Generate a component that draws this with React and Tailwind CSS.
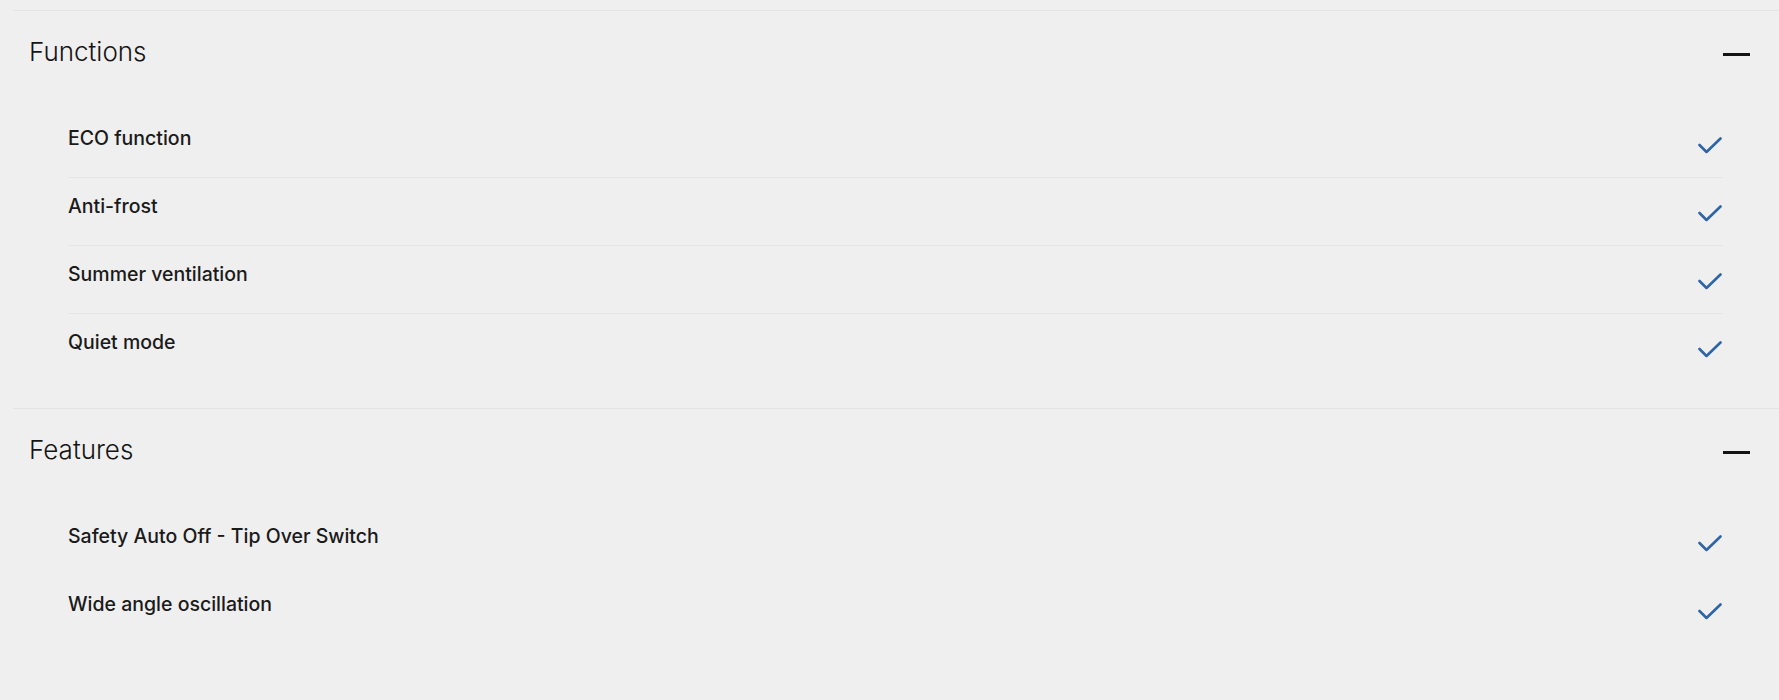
const sections = [
  {
    title: 'Functions',
    items: ['ECO function', 'Anti-frost', 'Summer ventilation', 'Quiet mode'],
    dividers: true,
  },
  {
    title: 'Features',
    items: ['Safety Auto Off - Tip Over Switch', 'Wide angle oscillation'],
    dividers: false,
  },
]

function Check() {
  return (
    <svg width="24" height="18" viewBox="0 0 24 18" fill="none" className="mt-[11px] mr-px">
      <polyline
        points="1.5,8 8.5,15 22.5,1.5"
        stroke="#2f65a5"
        strokeWidth="2.6"
        strokeLinecap="round"
        strokeLinejoin="round"
      />
    </svg>
  )
}

function Section({ title, items, dividers }) {
  return (
    <section className="border-t border-[#e4e4e4] pb-[26px]">
      {/* Header */}
      <div className="flex items-start justify-between pl-4 pr-[29px] pt-[25px]">
        <h2 className="text-[26px] leading-8 font-light text-[#141414]">{title}</h2>
        <span className="mt-[17px] block h-[3px] w-[27px] bg-[#141414]" />
      </div>

      {/* Items */}
      <ul className="mt-[42px] ml-[55px] mr-[56px]">
        {items.map((item, i) => (
          <li
            key={item}
            className={
              'flex h-[68px] items-start justify-between pt-4 ' +
              (dividers && i < items.length - 1 ? 'border-b border-[#e5e5e5]' : '')
            }
          >
            <span className="text-[19.5px] leading-6 font-medium text-[#1a1a1a]">{item}</span>
            <Check />
          </li>
        ))}
      </ul>
    </section>
  )
}

export default function App() {
  return (
    <div
      className="min-h-[700px] bg-[#efefef] pt-[10px] pl-[13px]"
      style={{ fontFamily: 'Inter, "Noto Sans", sans-serif' }}
    >
      {sections.map((s) => (
        <Section key={s.title} {...s} />
      ))}
    </div>
  )
}
